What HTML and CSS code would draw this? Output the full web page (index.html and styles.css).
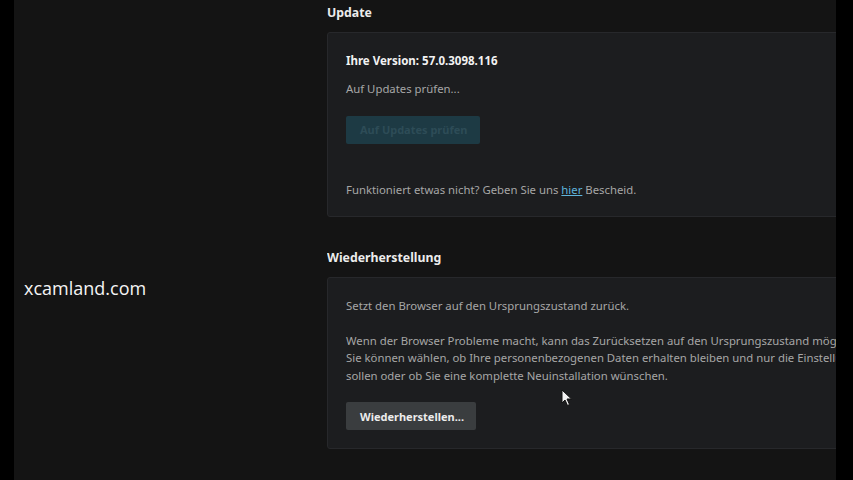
FILE: index.html
```html
<!DOCTYPE html>
<html lang="de">
<head>
<meta charset="utf-8">
<link rel="stylesheet" href="styles.css">
</head>
<body>
<div class="frame">
  <div class="edge-left"></div>
  <aside class="side">
    <div class="watermark">xcamland.com</div>
  </aside>
  <main class="main">
    <h2 class="heading">Update</h2>
    <section class="card card-update">
      <div class="version">Ihre Version: 57.0.3098.116</div>
      <div class="muted status">Auf Updates prüfen...</div>
      <button class="btn btn-disabled">Auf Updates prüfen</button>
      <div class="muted feedback">Funktioniert etwas nicht? Geben Sie uns <a class="link">hier</a> Bescheid.</div>
    </section>
    <h2 class="heading heading-2">Wiederherstellung</h2>
    <section class="card card-reset">
      <div class="muted">Setzt den Browser auf den Ursprungszustand zurück.</div>
      <p class="muted para">Wenn der Browser Probleme macht, kann das Zurücksetzen auf den Ursprungszustand möglicherweise helfen.<br>Sie können wählen, ob Ihre personenbezogenen Daten erhalten bleiben und nur die Einstellungen zurückgesetzt werden<br>sollen oder ob Sie eine komplette Neuinstallation wünschen.</p>
      <button class="btn btn-reset">Wiederherstellen...</button>
    </section>
  </main>
  <div class="edge-right"></div>
  <svg class="cursor" width="12" height="18" viewBox="0 0 12 18"><path d="M1 1 L1 14 L4 11 L6.5 16.5 L8.5 15.5 L6 10 L10.5 10 Z" fill="#f2f2f2" stroke="#111" stroke-width="1"/></svg>
</div>
</body>
</html>
```
FILE: styles.css
```css
* { box-sizing: border-box; }
html, body { margin: 0; padding: 0; background: #000; }
body { font-family: "Noto Sans", "Open Sans", sans-serif; }
.frame {
  position: relative;
  display: flex;
  width: 853px;
  height: 480px;
  overflow: hidden;
  background: #141414;
}
.edge-left { width: 14px; flex: none; background: #000; }
.edge-right { width: 17px; flex: none; background: #000; }
.side { width: 313px; flex: none; padding-top: 277px; padding-left: 10px; }
.watermark { color: #f4f4f4; font-family: "Open Sans", "Noto Sans", sans-serif; font-size: 18px; line-height: 22px; }
.main { width: 509px; flex: none; overflow: hidden; }
.heading {
  margin: 3px 0 0 0;
  font-size: 12.3px;
  line-height: 20px;
  font-weight: 700;
  color: #ececec;
}
.heading-2 { margin-top: 31px; }
.card {
  width: 620px;
  margin-top: 9px;
  background: #1c1d1f;
  border: 1px solid #27282b;
  border-radius: 3px;
  padding: 19px 18px 18px 18px;
  font-size: 11.35px;
  line-height: 17.5px;
}
.version { color: #f2f2f2; font-weight: 700; font-size: 11.5px; line-height: 18px; }
.muted { color: #a6a6a6; white-space: nowrap; }
.status { margin-top: 10px; }
.btn {
  display: block;
  border: none;
  border-radius: 2px;
  font-family: inherit;
  font-size: 11px;
  font-weight: 700;
  height: 28px;
  padding: 0 14px;
  white-space: nowrap;
  text-align: left;
}
.btn-disabled { margin-top: 18px; width: 134px; background: #1d3a44; color: #2d4c57; }
.feedback { margin-top: 37px; }
.link { color: #5fb4dc; text-decoration: underline; }
.para { margin: 17px 0 0 0; }
.btn-reset { margin-top: 18px; width: 130px; background: #3a3d3f; color: #ececec; }
.cursor { position: absolute; left: 561px; top: 389px; }
```
